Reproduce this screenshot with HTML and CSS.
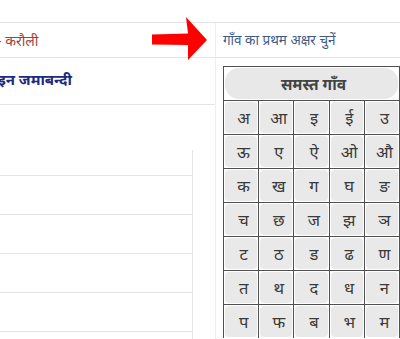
FILE: index.html
```html
<!DOCTYPE html>
<html lang="hi">
<head>
<meta charset="utf-8">
<title>जमाबन्दी</title>
<link rel="stylesheet" href="styles.css">
</head>
<body>
<div class="page">
  <div class="toprow">
    <div class="lcell"><span class="district">- करौली</span></div>
    <div class="rcell">गाँव का प्रथम अक्षर चुनें</div>
  </div>
  <div class="main">
    <div class="lcol">
      <div class="title"><span class="title-text">ऑनलाइन जमाबन्दी</span></div>
      <div class="list">
        <div class="lrow first"></div>
        <div class="lrow"></div>
        <div class="lrow"></div>
        <div class="lrow"></div>
        <div class="lrow"></div>
        <div class="lrow"></div>
      </div>
    </div>
    <div class="rcol">
      <div class="box">
        <div class="allrow"><button class="all">समस्त गाँव</button></div>
        <div class="grid">
          <div class="cell"><button class="key">अ</button></div>
          <div class="cell"><button class="key">आ</button></div>
          <div class="cell"><button class="key">इ</button></div>
          <div class="cell"><button class="key">ई</button></div>
          <div class="cell"><button class="key">उ</button></div>
          <div class="cell"><button class="key">ऊ</button></div>
          <div class="cell"><button class="key">ए</button></div>
          <div class="cell"><button class="key">ऐ</button></div>
          <div class="cell"><button class="key">ओ</button></div>
          <div class="cell"><button class="key">औ</button></div>
          <div class="cell"><button class="key">क</button></div>
          <div class="cell"><button class="key">ख</button></div>
          <div class="cell"><button class="key">ग</button></div>
          <div class="cell"><button class="key">घ</button></div>
          <div class="cell"><button class="key">ङ</button></div>
          <div class="cell"><button class="key">च</button></div>
          <div class="cell"><button class="key">छ</button></div>
          <div class="cell"><button class="key">ज</button></div>
          <div class="cell"><button class="key">झ</button></div>
          <div class="cell"><button class="key">ञ</button></div>
          <div class="cell"><button class="key">ट</button></div>
          <div class="cell"><button class="key">ठ</button></div>
          <div class="cell"><button class="key">ड</button></div>
          <div class="cell"><button class="key">ढ</button></div>
          <div class="cell"><button class="key">ण</button></div>
          <div class="cell"><button class="key">त</button></div>
          <div class="cell"><button class="key">थ</button></div>
          <div class="cell"><button class="key">द</button></div>
          <div class="cell"><button class="key">ध</button></div>
          <div class="cell"><button class="key">न</button></div>
          <div class="cell"><button class="key">प</button></div>
          <div class="cell"><button class="key">फ</button></div>
          <div class="cell"><button class="key">ब</button></div>
          <div class="cell"><button class="key">भ</button></div>
          <div class="cell"><button class="key">म</button></div>
        </div>
      </div>
    </div>
  </div>
  <svg class="arrow" width="64" height="50" viewBox="0 0 64 50">
    <defs><filter id="soft"><feGaussianBlur stdDeviation="0.7"/></filter></defs>
    <path d="M3 19.5 L39 18.5 L37 2 L58 25 L39 45 L39 30 L3 29.5 Z" fill="#f00" filter="url(#soft)"/>
  </svg>
</div>
</body>
</html>
```
FILE: styles.css
```css
html, body {
  margin: 0;
  padding: 0;
  background: #fff;
}
body {
  font-family: "Noto Sans", "Lohit Devanagari", sans-serif;
  width: 400px;
  height: 339px;
  overflow: hidden;
}
.page {
  position: relative;
  width: 400px;
  height: 339px;
  overflow: hidden;
  padding-top: 22px;
  box-sizing: border-box;
}
.toprow {
  display: flex;
  height: 34px;
  border-top: 1px solid #e4e4e4;
  border-bottom: 1px solid #e4e4e4;
}
.lcell {
  width: 215px;
  flex: none;
  border-right: 1px solid #efefef;
  overflow: hidden;
  white-space: nowrap;
  display: flex;
  align-items: center;
}
.district {
  margin-left: -3px;
  font-size: 14px;
  color: #a23f36;
}
.rcell {
  flex: 1;
  padding-left: 7px;
  display: flex;
  align-items: center;
  font-size: 13.5px;
  color: #3f5b85;
  white-space: nowrap;
}
.main {
  display: flex;
}
.lcol {
  width: 215px;
  flex: none;
  border-right: 1px solid #efefef;
  overflow: hidden;
  height: 290px;
}
.title {
  height: 42px;
  padding-bottom: 4px;
  border-bottom: 1px solid #e4e4e4;
  display: flex;
  align-items: center;
  white-space: nowrap;
}
.title-text {
  margin-left: -44px;
  font-size: 15px;
  font-weight: bold;
  color: #1c2a80;
}
.list {
  margin-top: 45px;
  width: 192px;
  border-right: 1px solid #e4e4e4;
}
.lrow {
  height: 38px;
  border-bottom: 1px solid #e4e4e4;
}
.lrow.first {
  height: 25px;
}
.rcol {
  flex: 1;
  padding: 8px 0 0 7px;
}
.box {
  width: 175px;
  border: 1px solid #505050;
  border-bottom: none;
}
.allrow {
  padding: 1px;
  border-bottom: 1px solid #505050;
}
.all {
  display: block;
  width: 100%;
  height: 31px;
  border: none;
  border-radius: 14px;
  background: #e8e8e8;
  font-family: inherit;
  font-size: 15.5px;
  font-weight: bold;
  color: #444;
  padding: 0 0 0 4px;
}
.grid {
  display: grid;
  grid-template-columns: repeat(5, 1fr);
  gap: 1px;
  background: #505050;
}
.cell {
  background: #fff;
  padding: 1px;
}
.key {
  display: block;
  width: 100%;
  height: 31px;
  border: none;
  border-radius: 4px;
  background: #e9e9e9;
  font-family: inherit;
  font-size: 16.5px;
  color: #3a3a3a;
  padding: 0 0 0 5px;
}
.arrow {
  position: absolute;
  left: 149px;
  top: 15px;
}
```
